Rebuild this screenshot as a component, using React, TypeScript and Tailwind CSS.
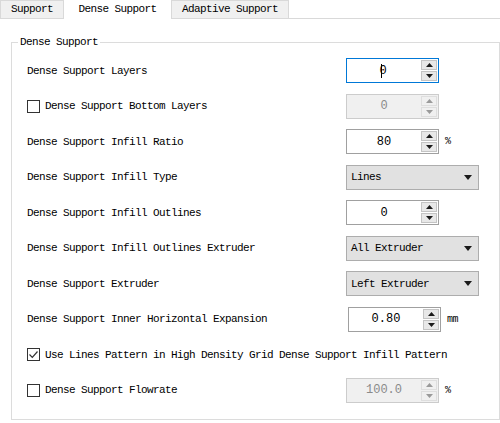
import React from "react";

const FONT = { fontFamily: '"Liberation Mono", "DejaVu Sans Mono", monospace' };

function SpinBox({ value, focused = false, disabled = false, cursor = false }: { value: string; focused?: boolean; disabled?: boolean; cursor?: boolean }) {
  const border = focused ? "border-[#0078d7]" : disabled ? "border-[#cccccc]" : "border-[#a0a0a0]";
  const bg = disabled ? "bg-[#f0f0f0]" : "bg-white";
  const arrow = disabled ? "#9a9a9a" : "#1a1a1a";
  return (
    <div className={`flex w-[93px] h-[25px] border ${border} ${bg}`}>
      <div className={`flex-1 flex items-center justify-center text-[12px] ${disabled ? "text-[#8a8a8a]" : "text-black"}`}>
        {cursor && <span className="inline-block w-px h-[14px] bg-black mr-[-3px]" />}
        {value}
      </div>
      <div className="w-[17px] flex flex-col gap-px py-px pr-px">
        {[0, 1].map((i) => (
          <div key={i} className={`flex-1 flex items-center justify-center border ${disabled ? "border-[#dedede] bg-[#f0f0f0]" : "border-[#c4c4c4] bg-[#e8e8e8]"}`}>
            <svg width="7" height="4" viewBox="0 0 7 4">
              <path d={i === 0 ? "M0 4 L3.5 0 L7 4 Z" : "M0 0 L3.5 4 L7 0 Z"} fill={arrow} />
            </svg>
          </div>
        ))}
      </div>
    </div>
  );
}

function Combo({ value }: { value: string }) {
  return (
    <div className="flex items-center justify-between w-[133px] h-[25px] border border-[#adadad] bg-[#e1e1e1] pl-[4px] pr-[6px] text-[11px] tracking-[-0.6px] text-black">
      <span>{value}</span>
      <svg width="8" height="5" viewBox="0 0 8 5">
        <path d="M0 0 L8 0 L4 5 Z" fill="#1a1a1a" />
      </svg>
    </div>
  );
}

function Check({ checked = false }: { checked?: boolean }) {
  return (
    <div className="w-[13px] h-[13px] border border-[#333333] bg-white flex items-center justify-center mr-[5px] shrink-0">
      {checked && (
        <svg width="11" height="11" viewBox="0 0 11 11">
          <path d="M1.5 5.5 L4.3 8.3 L9.5 2.5" stroke="#333333" strokeWidth="1.2" fill="none" />
        </svg>
      )}
    </div>
  );
}

function Row({ children }: { children: React.ReactNode }) {
  return <div className="h-[35.5px] flex items-center">{children}</div>;
}

function Label({ text, check }: { text: string; check?: "on" | "off" }) {
  return (
    <div className="w-[319px] flex items-center text-[11px] tracking-[-0.6px] text-black whitespace-nowrap">
      {check && <Check checked={check === "on"} />}
      {text}
    </div>
  );
}

function Unit({ text }: { text: string }) {
  return <span className="ml-[6px] text-[10px] text-black tracking-[-0.5px]">{text}</span>;
}

export default function App() {
  return (
    <div className="w-[500px] h-[423px] bg-white overflow-hidden" style={FONT}>
      {/* Tabs */}
      <div className="flex items-end h-[19px] border-b border-[#d9d9d9] text-[11px] tracking-[-0.6px] text-black">
        <div className="w-[64px] h-[18px] bg-[#f0f0f0] border border-b-0 border-[#d9d9d9] flex items-center justify-center">Support</div>
        <div className="w-[107px] h-[20px] -mb-px bg-white flex items-center justify-center">Dense Support</div>
        <div className="w-[118px] h-[18px] bg-[#f0f0f0] border border-b-0 border-[#d9d9d9] flex items-center justify-center">Adaptive Support</div>
      </div>

      {/* Group box */}
      <fieldset className="mt-[17px] ml-[11px] w-[489px] h-[384px] border border-[#dcdcdc]">
        <legend className="ml-[6px] px-[2px] text-[11px] leading-[12px] tracking-[-0.6px] text-black">Dense Support</legend>
        <div className="pl-[15px] mt-[5px]">
          <Row>
            <Label text="Dense Support Layers" />
            <SpinBox value="0" focused cursor />
          </Row>
          <Row>
            <Label text="Dense Support Bottom Layers" check="off" />
            <SpinBox value="0" disabled />
          </Row>
          <Row>
            <Label text="Dense Support Infill Ratio" />
            <SpinBox value="80" />
            <Unit text="%" />
          </Row>
          <Row>
            <Label text="Dense Support Infill Type" />
            <Combo value="Lines" />
          </Row>
          <Row>
            <Label text="Dense Support Infill Outlines" />
            <SpinBox value="0" />
          </Row>
          <Row>
            <Label text="Dense Support Infill Outlines Extruder" />
            <Combo value="All Extruder" />
          </Row>
          <Row>
            <Label text="Dense Support Extruder" />
            <Combo value="Left Extruder" />
          </Row>
          <Row>
            <Label text="Dense Support Inner Horizontal Expansion" />
            <div className="ml-[2px] flex items-center">
              <SpinBox value="0.80" />
              <Unit text="mm" />
            </div>
          </Row>
          <Row>
            <Label text="Use Lines Pattern in High Density Grid Dense Support Infill Pattern" check="on" />
          </Row>
          <Row>
            <Label text="Dense Support Flowrate" check="off" />
            <SpinBox value="100.0" disabled />
            <Unit text="%" />
          </Row>
        </div>
      </fieldset>
    </div>
  );
}
